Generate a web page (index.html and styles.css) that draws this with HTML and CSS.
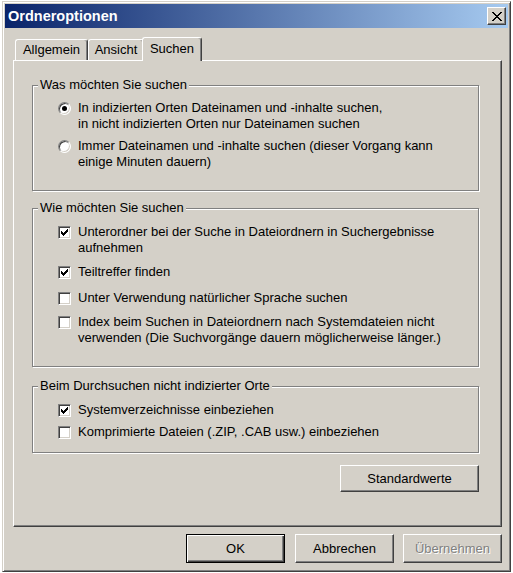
FILE: index.html
```html
<!DOCTYPE html>
<html lang="de">
<head>
    <meta charset="UTF-8">
    <meta content="width=device-width, initial-scale=1.0" name="viewport">
    <link rel="stylesheet" href="styles.css">
</head>
<body>
    <div class="dialog">
        <!-- Title bar -->
        <div class="titlebar">
            <span class="title">Ordneroptionen</span>
            <button class="close-btn" type="button">
                <svg width="10" height="9" viewBox="0 0 10 9" shape-rendering="crispEdges">
                    <path d="M0 0h2v1h-2zM8 0h2v1h-2zM1 1h2v1h-2zM7 1h2v1h-2zM2 2h2v1h-2zM6 2h2v1h-2zM3 3h4v1h-4zM4 4h2v1h-2zM3 5h4v1h-4zM2 6h2v1h-2zM6 6h2v1h-2zM1 7h2v1h-2zM7 7h2v1h-2zM0 8h2v1h-2zM8 8h2v1h-2z" fill="#000"/>
                </svg>
            </button>
        </div>

        <div class="content">
            <!-- Tabs -->
            <div class="tabs">
                <div class="tab tab-general">Allgemein</div>
                <div class="tab tab-view">Ansicht</div>
                <div class="tab tab-search active">Suchen</div>
            </div>

            <div class="panel">
                <div class="group group-what">
                    <div class="group-title">Was möchten Sie suchen</div>
                    <div class="option">
                        <span class="radio checked"></span>
                        <span class="label">In indizierten Orten Dateinamen und -inhalte suchen,<br>in nicht indizierten Orten nur Dateinamen suchen</span>
                    </div>
                    <div class="option">
                        <span class="radio"></span>
                        <span class="label">Immer Dateinamen und -inhalte suchen (dieser Vorgang kann<br>einige Minuten dauern)</span>
                    </div>
                </div>

                <div class="group group-how">
                    <div class="group-title">Wie möchten Sie suchen</div>
                    <div class="option">
                        <span class="checkbox checked"></span>
                        <span class="label">Unterordner bei der Suche in Dateiordnern in Suchergebnisse<br>aufnehmen</span>
                    </div>
                    <div class="option">
                        <span class="checkbox checked"></span>
                        <span class="label">Teiltreffer finden</span>
                    </div>
                    <div class="option option-wide">
                        <span class="checkbox"></span>
                        <span class="label">Unter Verwendung natürlicher Sprache suchen</span>
                    </div>
                    <div class="option">
                        <span class="checkbox"></span>
                        <span class="label">Index beim Suchen in Dateiordnern nach Systemdateien nicht<br>verwenden (Die Suchvorgänge dauern möglicherweise länger.)</span>
                    </div>
                </div>

                <div class="group group-where">
                    <div class="group-title">Beim Durchsuchen nicht indizierter Orte</div>
                    <div class="option">
                        <span class="checkbox checked"></span>
                        <span class="label">Systemverzeichnisse einbeziehen</span>
                    </div>
                    <div class="option option-tight">
                        <span class="checkbox"></span>
                        <span class="label">Komprimierte Dateien (.ZIP, .CAB usw.) einbeziehen</span>
                    </div>
                </div>

                <div class="panel-actions">
                    <button class="btn btn-defaults" type="button">Standardwerte</button>
                </div>
            </div>

            <!-- Dialog buttons -->
            <div class="footer">
                <button class="btn btn-default" type="button">OK</button>
                <button class="btn" type="button">Abbrechen</button>
                <button class="btn" type="button" disabled>Übernehmen</button>
            </div>
        </div>
    </div>
</body>
</html>
```

FILE: styles.css
```css
body {
    margin: 0;
    background: #ffffff;
    font-family: "Liberation Sans", Arial, sans-serif;
    font-size: 13px;
    color: #000000;
}

.dialog {
    width: 509px;
    height: 571px;
    box-sizing: border-box;
    margin: 1px 0 0 2px;
    padding: 2px;
    background: #d4d0c8;
    border: 1px solid;
    border-color: #d4d0c8 #404040 #404040 #d4d0c8;
    box-shadow: inset 1px 1px #ffffff, inset -1px -1px #808080;
    display: flex;
    flex-direction: column;
}

/* Title bar */
.titlebar {
    height: 24px;
    flex: none;
    display: flex;
    align-items: center;
    justify-content: space-between;
    padding: 0 2px 0 3px;
    background: linear-gradient(to right, #0a246a, #a6caf0);
}

.title {
    color: #ffffff;
    font-weight: bold;
    font-size: 14.5px;
}

.close-btn {
    width: 19px;
    height: 18px;
    padding: 0;
    display: flex;
    align-items: center;
    justify-content: center;
    background: #d4d0c8;
    border: 1px solid;
    border-color: #ffffff #404040 #404040 #ffffff;
    box-shadow: inset -1px -1px #808080;
}

.content {
    flex: 1;
    padding: 0 6px 0 8px;
    display: flex;
    flex-direction: column;
}

/* Tabs */
.tabs {
    display: flex;
    align-items: flex-end;
    height: 23px;
    margin-top: 9px;
    padding-left: 2px;
}

.tab {
    height: 21px;
    box-sizing: border-box;
    text-align: center;
    line-height: 20px;
    border: 1px solid;
    border-bottom: none;
    border-color: #ffffff #404040 #404040 #ffffff;
    border-radius: 3px 3px 0 0;
    box-shadow: inset -1px 0 #808080;
    background: #d4d0c8;
}

.tab-general {
    width: 73px;
}

.tab-view {
    width: 56px;
}

.tab.active {
    width: 60px;
    height: 24px;
    line-height: 21px;
    margin: 0 0 -1px -2px;
    position: relative;
    z-index: 1;
}

.panel {
    height: 467px;
    flex: none;
    box-sizing: border-box;
    padding: 24px 22px 0 18px;
    border: 1px solid;
    border-color: #ffffff #404040 #404040 #ffffff;
    box-shadow: inset -1px -1px #808080;
}

/* Group boxes */
.group {
    border: 1px solid #808080;
    box-shadow: inset 1px 1px #ffffff, 1px 1px #ffffff;
    padding: 0 10px 20px 25px;
}

.group-title {
    display: table;
    margin: -9px 0 0 -20px;
    padding: 0 2px;
    line-height: 16px;
    background: #d4d0c8;
}

.group-how {
    margin-top: 17px;
}

.group-where {
    margin-top: 19px;
    padding-bottom: 12px;
}

.option {
    display: flex;
    align-items: flex-start;
    gap: 7px;
    margin-top: 6px;
    line-height: 16px;
}

.group-what .option:nth-child(2) {
    margin-top: 7px;
}

.group-how .option {
    margin-top: 8px;
}

.group-how .option-wide {
    margin-top: 10px;
}

.group-where .option {
    margin-top: 8px;
}

.group-where .option-tight {
    margin-top: 6px;
}

.checkbox {
    flex: none;
    width: 13px;
    height: 13px;
    box-sizing: border-box;
    margin-top: 2px;
    background: #ffffff;
    border: 1px solid;
    border-color: #808080 #ffffff #ffffff #808080;
    box-shadow: inset 1px 1px #404040, inset -1px -1px #d4d0c8;
}

.checkbox.checked {
    background: #ffffff url("data:image/svg+xml,%3Csvg xmlns='http://www.w3.org/2000/svg' width='11' height='11' shape-rendering='crispEdges'%3E%3Cpath d='M8 2h1v1h-1zM7 3h2v1h-2zM2 4h1v1h-1zM6 4h3v1h-3zM2 5h2v1h-2zM5 5h3v1h-3zM2 6h5v1h-5zM3 7h3v1h-3zM4 8h1v1h-1z' fill='%23000'/%3E%3C/svg%3E") no-repeat 0 0;
}

.radio {
    flex: none;
    width: 13px;
    height: 13px;
    box-sizing: border-box;
    margin-top: 2px;
    border-radius: 50%;
    background: #ffffff;
    border: 1px solid;
    border-color: #808080 #ffffff #ffffff #808080;
    box-shadow: inset 1px 1px #404040, inset -1px -1px #d4d0c8;
    display: flex;
    align-items: center;
    justify-content: center;
}

.radio.checked::after {
    content: "";
    width: 5px;
    height: 5px;
    border-radius: 50%;
    background: #000000;
}

/* Buttons */
.btn {
    font-family: "Liberation Sans", Arial, sans-serif;
    font-size: 13px;
    color: #000000;
    background: #d4d0c8;
    border: 1px solid;
    border-color: #ffffff #404040 #404040 #ffffff;
    box-shadow: inset -1px -1px #808080;
    padding: 0;
    height: 29px;
    width: 99px;
}

.btn-default {
    border-color: #000000;
    box-shadow: inset 1px 1px #ffffff, inset -1px -1px #404040, inset -2px -2px #808080;
    margin-right: 1px;
}

.btn:disabled {
    color: #808080;
    text-shadow: 1px 1px #ffffff;
}

.panel-actions {
    display: flex;
    justify-content: flex-end;
    margin-top: 12px;
}

.btn-defaults {
    width: 139px;
    height: 27px;
}

.footer {
    display: flex;
    justify-content: flex-end;
    gap: 9px;
    margin-top: 7px;
}
```
